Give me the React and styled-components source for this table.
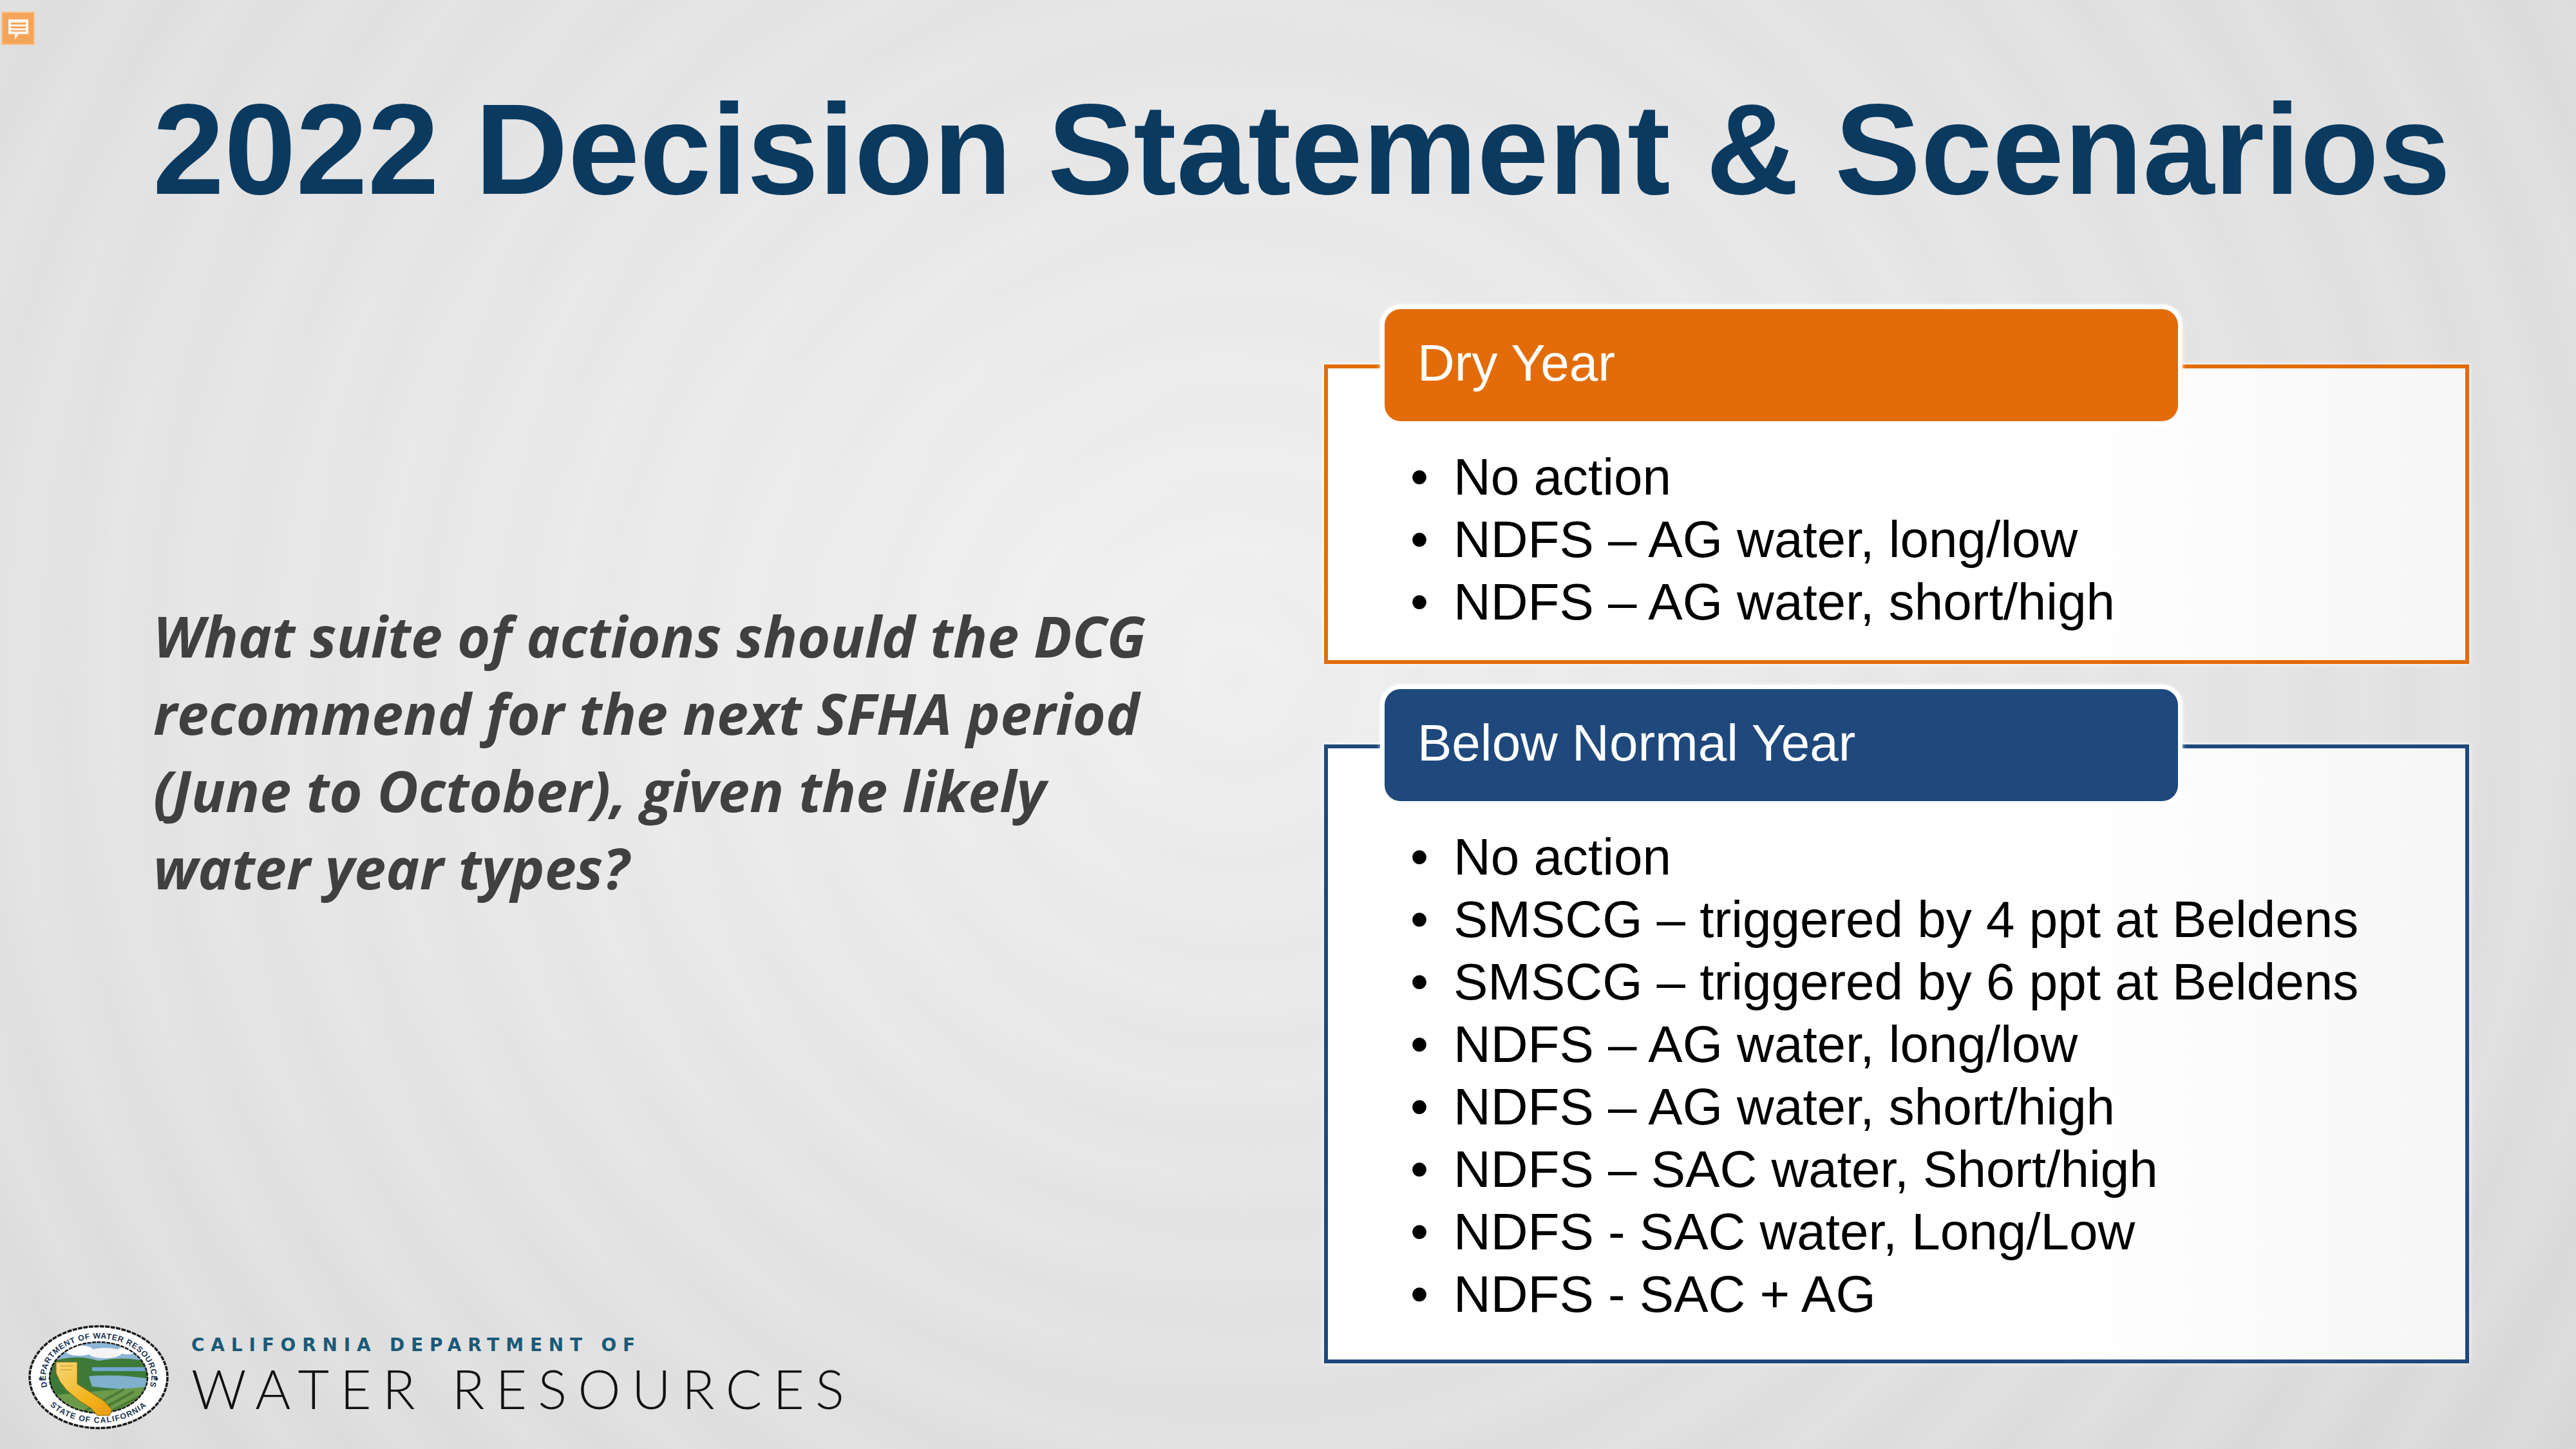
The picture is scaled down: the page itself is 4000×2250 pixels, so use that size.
import React from "react";
import styled, { createGlobalStyle } from "styled-components";

const Global = createGlobalStyle`
  html, body { margin: 0; padding: 0; }
  body { background: #e3e3e3; }
`;

const Page = styled.div`
  position: relative;
  width: 4000px;
  height: 2250px;
  overflow: hidden;
  display: flex;
  flex-direction: column;
  font-family: "Liberation Sans", Arial, sans-serif;
  background:
    repeating-radial-gradient(circle at 48% 47%, rgba(255,255,255,0) 0px, rgba(255,255,255,0.12) 70px, rgba(255,255,255,0) 140px),
    radial-gradient(ellipse at 45% 42%, #efefef 0%, #e6e6e6 40%, #dcdcdc 80%, #d6d6d6 100%);
`;

const CommentMark = styled.svg`
  position: absolute;
  left: 2px;
  top: 18px;
  width: 52px;
  height: 52px;
`;

const Title = styled.h1`
  margin: 0;
  padding: 132px 0 0 237px;
  font-family: "Liberation Sans", Arial, sans-serif;
  font-weight: 700;
  font-size: 200px;
  line-height: 200px;
  color: #0b3a60;
  white-space: nowrap;
`;

const Main = styled.div`
  flex: 1;
  display: grid;
  grid-template-columns: 2056px 1778px;
  min-height: 0;
`;

const LeftColumn = styled.div`
  display: flex;
  flex-direction: column;
  padding-bottom: 30px;
`;

const Question = styled.p`
  margin: 595px 0 0 238px;
  font-family: "Open Sans", Lato, sans-serif;
  font-style: italic;
  font-weight: 700;
  font-size: 88px;
  line-height: 120px;
  color: #404040;
  white-space: nowrap;
`;

const Footer = styled.div`
  margin-top: auto;
  display: flex;
  align-items: center;
  gap: 34px;
  padding-left: 43px;
`;

const Seal = styled.svg`
  width: 220px;
  height: 163px;
  flex: none;
`;

const Wordmark = styled.div`
  display: flex;
  flex-direction: column;
  gap: 0;
`;

const Dept = styled.div`
  font-family: "DejaVu Sans", Lato, sans-serif;
  font-weight: 700;
  font-size: 28px;
  line-height: 33px;
  letter-spacing: 9.8px;
  color: #1b5a77;
  white-space: nowrap;
`;

const Agency = styled.div`
  font-family: Lato, "DejaVu Sans", sans-serif;
  font-weight: 300;
  font-size: 84px;
  line-height: 101px;
  letter-spacing: 17px;
  color: #111;
  white-space: nowrap;
`;

const RightColumn = styled.div`
  display: flex;
  flex-direction: column;
  gap: 32px;
  padding-top: 141px;
`;

const Card = styled.section`
  display: flex;
  flex-direction: column;
`;

const Tab = styled.div`
  position: relative;
  z-index: 1;
  box-sizing: border-box;
  margin-left: 87px;
  width: 1246px;
  height: 188px;
  border: 7px solid #ffffff;
  border-radius: 32px;
  background: ${(p) => p.$color};
  box-shadow: 0 0 6px rgba(255, 255, 255, 0.8);
  display: flex;
  align-items: center;
  padding: 0 0 6px 51px;
  color: #ffffff;
  font-size: 80px;
  line-height: 80px;
`;

const Frame = styled.div`
  box-sizing: border-box;
  margin-top: -95px;
  height: ${(p) => p.$height}px;
  border: 6px solid ${(p) => p.$color};
  background: linear-gradient(90deg, #ffffff 0%, #ffffff 65%, #f6f6f6 100%);
  box-shadow: 0 0 8px rgba(255, 255, 255, 0.9);
  padding: 120px 0 0 128px;
`;

const List = styled.ul`
  margin: 0;
  padding: 0;
  list-style: none;
`;

const Item = styled.li`
  display: flex;
  font-size: 80px;
  line-height: 97px;
  color: #000;
  white-space: nowrap;
`;

const Bullet = styled.span`
  width: 67px;
  flex: none;
`;

const scenarios = [
  {
    title: "Dry Year",
    color: "#e36c09",
    height: 465,
    items: ["No action", "NDFS \u2013 AG water, long/low", "NDFS \u2013 AG water, short/high"],
  },
  {
    title: "Below Normal Year",
    color: "#1f497d",
    height: 961,
    items: [
      "No action",
      "SMSCG \u2013 triggered by 4 ppt at Beldens",
      "SMSCG \u2013 triggered by 6 ppt at Beldens",
      "NDFS \u2013 AG water, long/low",
      "NDFS \u2013 AG water, short/high",
      "NDFS \u2013 SAC water, Short/high",
      "NDFS - SAC water, Long/Low",
      "NDFS - SAC + AG",
    ],
  },
];

function SealLogo() {
  return (
    <Seal viewBox="0 0 220 163">
      <defs>
        <clipPath id="inner">
          <ellipse cx="110" cy="82" rx="76" ry="55" />
        </clipPath>
        <path id="topArc" d="M 33 102 A 82 60 0 1 1 187 102" />
        <path id="botArc" d="M 27 117 A 96 71 0 0 0 193 117" />
        <linearGradient id="gold" x1="0" y1="0" x2="1" y2="1">
          <stop offset="0" stopColor="#f6d77a" />
          <stop offset="0.6" stopColor="#f3b51d" />
          <stop offset="1" stopColor="#e89a12" />
        </linearGradient>
      </defs>
      <ellipse cx="110" cy="81.5" rx="107" ry="79" fill="#ffffff" stroke="#1a1a1a" strokeWidth="3.5" strokeDasharray="7 1.5" />
      <text fontFamily="Liberation Sans, Arial, sans-serif" fontWeight="700" fontSize="12.5" fill="#1d3550" letterSpacing="0.6">
        <textPath href="#topArc" startOffset="50%" textAnchor="middle">DEPARTMENT OF WATER RESOURCES</textPath>
      </text>
      <text fontFamily="Liberation Sans, Arial, sans-serif" fontWeight="700" fontSize="12.5" fill="#1d3550" letterSpacing="1.2">
        <textPath href="#botArc" startOffset="50%" textAnchor="middle">STATE OF CALIFORNIA</textPath>
      </text>
      <circle cx="20" cy="84" r="2.5" fill="#1d3550" />
      <circle cx="200" cy="84" r="2.5" fill="#1d3550" />
      <g clipPath="url(#inner)">
        <rect x="30" y="20" width="160" height="130" fill="#8db6d6" />
        <ellipse cx="80" cy="40" rx="22" ry="8" fill="#ffffff" />
        <ellipse cx="120" cy="44" rx="26" ry="8" fill="#f4f4f4" />
        <ellipse cx="155" cy="40" rx="16" ry="6" fill="#ffffff" />
        <path d="M30 60 Q 70 44 110 56 Q 150 48 190 58 L190 150 L30 150 Z" fill="#3d7a3a" />
        <rect x="100" y="66" width="90" height="6" fill="#6fa7cf" />
        <path d="M95 80 Q 140 76 190 84 L190 104 Q 140 100 100 96 Z" fill="#7fb0cc" />
        <path d="M30 110 L190 96 L190 150 L30 150 Z" fill="#6b9a4a" />
        <path d="M60 150 L150 100 M80 150 L165 104 M100 150 L180 108 M120 150 L190 116" stroke="#4b7c36" strokeWidth="4" />
        <path d="M30 70 Q 40 90 36 120 L30 140 Z" fill="#2f5f30" />
      </g>
      <ellipse cx="110" cy="82" rx="76" ry="55" fill="none" stroke="#1a1a1a" strokeWidth="2.5" strokeDasharray="6 1.5" />
      <path d="M44 58 L77 58 L77 92 L118 118 L131 132 L127 141 L108 141 L99 130 L80 118 L60 101 L50 88 L44 75 Z" fill="url(#gold)" stroke="#8a6a10" strokeWidth="1" />
      <path d="M50 64 L70 64 M50 70 L68 70" stroke="#c4901a" strokeWidth="1.2" />
    </Seal>
  );
}

export default function App() {
  return (
    <>
      <Global />
      <Page>
        <CommentMark viewBox="0 0 52 52">
          <rect x="1" y="1" width="50" height="50" fill="#f5a55a" stroke="#f9c38e" strokeWidth="2" />
          <path d="M11 12 H42 V35 H27 L21 44 V35 H11 Z" fill="#fdf3ea" />
          <rect x="15" y="17" width="23" height="3" fill="#f5a55a" />
          <rect x="15" y="23" width="23" height="3" fill="#f5a55a" />
          <rect x="15" y="29" width="23" height="2" fill="#f5a55a" />
        </CommentMark>
        <Title>2022 Decision Statement &amp; Scenarios</Title>
        <Main>
          <LeftColumn>
            <Question>
              What suite of actions should the DCG
              <br />
              recommend for the next SFHA period
              <br />
              (June to October), given the likely
              <br />
              water year types?
            </Question>
            <Footer>
              <SealLogo />
              <Wordmark>
                <Dept>CALIFORNIA DEPARTMENT OF</Dept>
                <Agency>WATER RESOURCES</Agency>
              </Wordmark>
            </Footer>
          </LeftColumn>
          <RightColumn>
            {scenarios.map((s) => (
              <Card key={s.title}>
                <Tab $color={s.color}>{s.title}</Tab>
                <Frame $color={s.color} $height={s.height}>
                  <List>
                    {s.items.map((it, i) => (
                      <Item key={i}>
                        <Bullet>{"\u2022"}</Bullet>
                        {it}
                      </Item>
                    ))}
                  </List>
                </Frame>
              </Card>
            ))}
          </RightColumn>
        </Main>
      </Page>
    </>
  );
}
